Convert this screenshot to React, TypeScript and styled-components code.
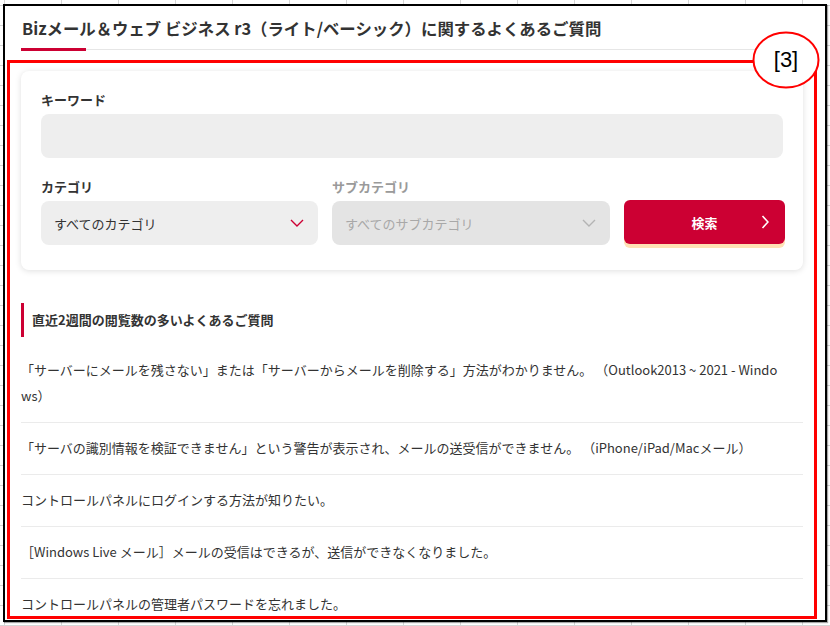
import React from "react";
import styled, { createGlobalStyle } from "styled-components";

const GlobalStyle = createGlobalStyle`
  html,
  body {
    margin: 0;
    padding: 0;
    width: 830px;
    height: 626px;
    overflow: hidden;
  }

  body {
    background-color: #ffffff;
    background-image: linear-gradient(to right, #d6d6d6 1px, transparent 1px),
      linear-gradient(to bottom, #d6d6d6 1px, transparent 1px);
    background-size: 57px 20px;
    background-position: 4px 5px;
    font-family: "Noto Sans CJK JP", "Noto Sans", sans-serif;
    color: #333333;
  }

  * {
    box-sizing: border-box;
  }
`;

const Sheet = styled.div`
  position: relative;
  width: 830px;
  height: 626px;
  padding: 4px 0 0 3px;
`;

const Frame = styled.div`
  width: 824px;
  height: 618px;
  border: 2px solid #000000;
  background: #ffffff;
  overflow: hidden;
  box-shadow: 1px 1px 1px rgba(0, 0, 0, 0.35);
`;

const Page = styled.div`
  width: 798px;
  padding: 10px 0 0 16px;
`;

const Title = styled.h2`
  position: relative;
  margin: 0;
  padding: 0 0 9px 1px;
  font-size: 16.4px;
  line-height: 24px;
  font-weight: 700;
  color: #333333;
  border-bottom: 1px solid #e6e6e6;

  &::after {
    content: "";
    position: absolute;
    left: 0;
    bottom: -2px;
    width: 65px;
    height: 3px;
    background: #cc0033;
  }
`;

const SearchCard = styled.div`
  margin-top: 21px;
  padding: 19px 20px 25px;
  background: #ffffff;
  border-radius: 8px;
  box-shadow: 0 1px 6px rgba(0, 0, 0, 0.13);
`;

const FieldLabel = styled.div<{ $muted?: boolean }>`
  margin-bottom: 5px;
  font-size: 13px;
  line-height: 19px;
  font-weight: 700;
  color: ${(props) => (props.$muted ? "#9a9a9a" : "#333333")};
`;

const KeywordInput = styled.input`
  display: block;
  width: 100%;
  height: 44px;
  border: none;
  border-radius: 8px;
  background: #eeeeee;
  outline: none;
`;

const FilterRow = styled.div`
  display: grid;
  grid-template-columns: 277px 278px 1fr;
  column-gap: 14px;
  align-items: end;
  margin-top: 19px;
`;

const Select = styled.div<{ $disabled?: boolean }>`
  display: flex;
  align-items: center;
  justify-content: space-between;
  height: 44px;
  padding: 0 14px 0 13px;
  border-radius: 8px;
  background: ${(props) => (props.$disabled ? "#e4e4e4" : "#eeeeee")};
  font-size: 13px;
  color: ${(props) => (props.$disabled ? "#a8a8a8" : "#333333")};

  svg {
    flex: none;
  }
`;

const SearchButton = styled.button`
  position: relative;
  display: flex;
  align-items: center;
  justify-content: center;
  width: calc(100% + 2px);
  height: 44px;
  margin-bottom: 1px;
  border: none;
  border-radius: 6px;
  background: #cc0033;
  box-shadow: 0 4px 0 #ffe1b5;
  color: #ffffff;
  font-family: inherit;
  font-size: 13px;
  font-weight: 700;

  svg {
    position: absolute;
    right: 16px;
    top: 50%;
    transform: translateY(-50%);
  }
`;

const Ranking = styled.section`
  margin-top: 33px;
`;

const RankingHeading = styled.h3`
  margin: 0 0 8px;
  padding-left: 8px;
  height: 34px;
  border-left: 3px solid #cc0033;
  font-size: 13px;
  line-height: 34px;
  font-weight: 700;
  color: #333333;
`;

const FaqList = styled.ul`
  margin: 0;
  padding: 0;
  list-style: none;
`;

const FaqItem = styled.li`
  padding: 12px 24px 13px 0;
  border-bottom: 1px solid #ebebeb;
  font-size: 13px;
  line-height: 26px;
  color: #333333;
  word-break: break-all;
`;

const MarkupBox = styled.div`
  position: absolute;
  left: 7px;
  top: 60px;
  width: 810px;
  height: 559px;
  border: 3px solid #ff0000;
  pointer-events: none;
`;

const Callout = styled.div`
  position: absolute;
  left: 752px;
  top: 31px;
  width: 68px;
  height: 58px;
  display: flex;
  align-items: center;
  justify-content: center;

  svg {
    position: absolute;
    inset: 0;
  }
`;

const CalloutText = styled.span`
  position: relative;
  font-family: "Liberation Sans", Arial, sans-serif;
  font-size: 22px;
  line-height: 1;
  color: #000000;
`;

const ChevronDown = ({ color }: { color: string }) => (
  <svg width="14" height="8" viewBox="0 0 14 8">
    <path d="M1 1 L7 7 L13 1" fill="none" stroke={color} strokeWidth="1.4" />
  </svg>
);

const ChevronRight = () => (
  <svg width="8" height="14" viewBox="0 0 8 14">
    <path d="M1.5 1 L7 7 L1.5 13" fill="none" stroke="#ffffff" strokeWidth="1.6" />
  </svg>
);

const faqs = [
  "「サーバーにメールを残さない」または「サーバーからメールを削除する」方法がわかりません。 （Outlook2013 ~ 2021 - Windows）",
  "「サーバの識別情報を検証できません」という警告が表示され、メールの送受信ができません。 （iPhone/iPad/Macメール）",
  "コントロールパネルにログインする方法が知りたい。",
  "［Windows Live メール］メールの受信はできるが、送信ができなくなりました。",
  "コントロールパネルの管理者パスワードを忘れました。",
];

const App: React.FunctionComponent = () => (
  <Sheet>
    <GlobalStyle />
    <Frame>
      <Page>
        <Title>Bizメール＆ウェブ ビジネス r3（ライト/ベーシック）に関するよくあるご質問</Title>

        <SearchCard>
          <FieldLabel>キーワード</FieldLabel>
          <KeywordInput type="text" aria-label="キーワード" />

          <FilterRow>
            <div>
              <FieldLabel>カテゴリ</FieldLabel>
              <Select>
                <span>すべてのカテゴリ</span>
                <ChevronDown color="#cc0033" />
              </Select>
            </div>
            <div>
              <FieldLabel $muted>サブカテゴリ</FieldLabel>
              <Select $disabled>
                <span>すべてのサブカテゴリ</span>
                <ChevronDown color="#b4b4b4" />
              </Select>
            </div>
            <SearchButton type="button">
              検索
              <ChevronRight />
            </SearchButton>
          </FilterRow>
        </SearchCard>

        <Ranking>
          <RankingHeading>直近2週間の閲覧数の多いよくあるご質問</RankingHeading>
          <FaqList>
            {faqs.map((text) => (
              <FaqItem key={text}>{text}</FaqItem>
            ))}
          </FaqList>
        </Ranking>
      </Page>
    </Frame>

    <MarkupBox />
    <Callout>
      <svg width="68" height="58" viewBox="0 0 68 58">
        <ellipse cx="34" cy="29" rx="32.5" ry="27.5" fill="#ffffff" stroke="#ff0000" strokeWidth="2" />
      </svg>
      <CalloutText>[3]</CalloutText>
    </Callout>
  </Sheet>
);

export default App;
